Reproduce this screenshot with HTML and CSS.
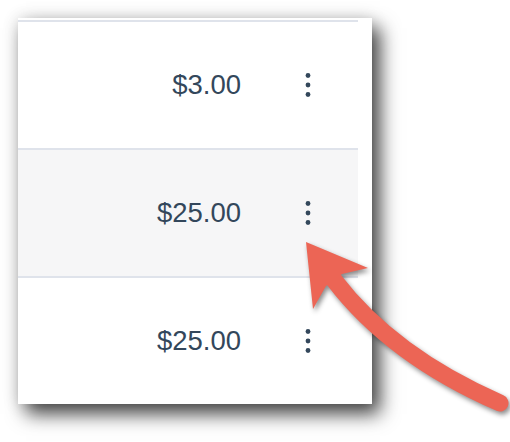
FILE: index.html
```html
<!DOCTYPE html>
<html>
<head>
<meta charset="utf-8">
<link rel="stylesheet" href="styles.css">
</head>
<body>
<div class="card">
  <div class="rows">
    <div class="row">
      <span class="amount">$3.00</span>
      <span class="menu"><svg width="10" height="26" viewBox="0 0 10 26"><circle cx="5" cy="3.5" r="2.4"/><circle cx="5" cy="13" r="2.4"/><circle cx="5" cy="22.5" r="2.4"/></svg></span>
    </div>
    <div class="row row-hover">
      <span class="amount">$25.00</span>
      <span class="menu"><svg width="10" height="26" viewBox="0 0 10 26"><circle cx="5" cy="3.5" r="2.4"/><circle cx="5" cy="13" r="2.4"/><circle cx="5" cy="22.5" r="2.4"/></svg></span>
    </div>
    <div class="row row-last">
      <span class="amount">$25.00</span>
      <span class="menu"><svg width="10" height="26" viewBox="0 0 10 26"><circle cx="5" cy="3.5" r="2.4"/><circle cx="5" cy="13" r="2.4"/><circle cx="5" cy="22.5" r="2.4"/></svg></span>
    </div>
  </div>
</div>
<svg class="arrow" width="510" height="442" viewBox="0 0 510 442">
  <path class="shaft" d="M500 403 Q392 356 334 280"/>
  <polygon class="head" points="306,242 368,268 342,274 326,286 313,309"/>
</svg>
</body>
</html>
```
FILE: styles.css
```css
html, body {
  margin: 0;
  padding: 0;
  background: #ffffff;
}
body {
  width: 510px;
  height: 442px;
  position: relative;
  overflow: hidden;
  font-family: "Liberation Sans", Arial, sans-serif;
}
.card {
  margin: 18px 0 0 18px;
  width: 340px;
  height: 384px;
  padding: 2px 14px 0 0;
  background: #ffffff;
  box-shadow: 8px 10px 18px rgba(0, 0, 0, 0.72), 0 0 16px rgba(0, 0, 0, 0.14);
}
.rows {
  border-top: 2px solid #dfe3eb;
  display: flex;
  flex-direction: column;
}
.row {
  height: 126px;
  border-bottom: 2px solid #dfe3eb;
  display: flex;
  align-items: center;
  justify-content: flex-end;
  padding-right: 45px;
}
.row-hover {
  background: #f6f6f7;
}
.row-last {
  border-bottom: none;
}
.amount {
  font-size: 27.5px;
  color: #33475b;
  letter-spacing: 0;
}
.menu {
  width: 10px;
  height: 26px;
  margin-left: 62px;
  display: flex;
}
.menu svg {
  fill: #33475b;
}
.arrow {
  position: absolute;
  left: 0;
  top: 0;
  filter: drop-shadow(2px 3px 2.5px rgba(0, 0, 0, 0.45));
}
.shaft {
  fill: none;
  stroke: #ec6555;
  stroke-width: 17;
  stroke-linecap: round;
}
.head {
  fill: #ec6555;
}
```
